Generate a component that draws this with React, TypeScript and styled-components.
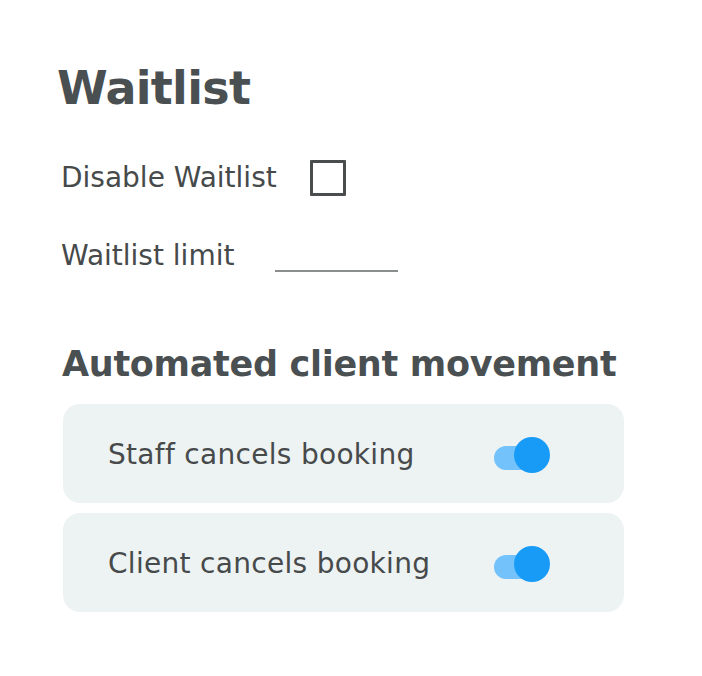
import React, { useState } from 'react';
import styled, { createGlobalStyle } from 'styled-components';

const Global = createGlobalStyle`
  body {
    margin: 0;
    background: #ffffff;
    font-family: "DejaVu Sans", "Open Sans", sans-serif;
  }
`;

const Page = styled.div`
  padding: 60px 0 0 57px;
  width: 566px;
`;

const Title = styled.h1`
  margin: 0;
  font-size: 46px;
  line-height: 56px;
  font-weight: 700;
  letter-spacing: -0.7px;
  color: #4a5052;
`;

const FieldRow = styled.div<{ $top: number }>`
  display: flex;
  align-items: center;
  margin-top: ${(p) => p.$top}px;
  padding-left: 4px;
`;

const Label = styled.span`
  font-size: 28px;
  line-height: 28px;
  color: #474a4b;
`;

const CheckBox = styled.button<{ $checked: boolean }>`
  width: 36px;
  height: 36px;
  margin-left: 33px;
  padding: 0;
  border: 3px solid #4a4d4e;
  border-radius: 1px;
  background: ${(p) => (p.$checked ? '#4a4d4e' : '#ffffff')};
  cursor: pointer;
`;

const LimitInput = styled.input`
  width: 123px;
  height: 33px;
  margin-left: 41px;
  align-self: flex-start;
  border: none;
  border-bottom: 2px solid #8b8e8f;
  background: transparent;
  outline: none;
  font-family: inherit;
  font-size: 22px;
  color: #474a4b;
  box-sizing: border-box;
`;

const Subtitle = styled.h2`
  margin: 71px 0 0 5px;
  font-size: 35px;
  line-height: 42px;
  font-weight: 700;
  letter-spacing: -0.3px;
  color: #4a5052;
  white-space: nowrap;
`;

const CardList = styled.div`
  display: flex;
  flex-direction: column;
  gap: 10px;
  margin: 19px 0 0 6px;
  width: 561px;
`;

const Card = styled.div`
  display: flex;
  align-items: center;
  justify-content: space-between;
  height: 99px;
  padding: 2px 74px 0 45px;
  border-radius: 17px;
  background: #edf2f2;
  box-sizing: border-box;
`;

const CardLabel = styled.span`
  font-size: 28px;
  line-height: 28px;
  letter-spacing: 0.3px;
  color: #474a4b;
`;

const Switch = styled.button<{ $on: boolean }>`
  position: relative;
  width: 56px;
  height: 36px;
  padding: 0;
  border: none;
  background: transparent;
  cursor: pointer;
`;

const Track = styled.span<{ $on: boolean }>`
  display: block;
  width: 52px;
  height: 24px;
  margin-top: 6px;
  border-radius: 12px;
  background: ${(p) => (p.$on ? '#73c2fb' : '#c4cacc')};
`;

const Knob = styled.span<{ $on: boolean }>`
  position: absolute;
  top: 0;
  left: ${(p) => (p.$on ? '20px' : '0')};
  width: 36px;
  height: 36px;
  border-radius: 50%;
  background: ${(p) => (p.$on ? '#189bf6' : '#f5f5f5')};
`;

function Toggle({ on, onChange }: { on: boolean; onChange: () => void }) {
  return (
    <Switch $on={on} onClick={onChange} aria-pressed={on}>
      <Track $on={on} />
      <Knob $on={on} />
    </Switch>
  );
}

export default function App() {
  const [disabled, setDisabled] = useState(false);
  const [limit, setLimit] = useState('');
  const [staff, setStaff] = useState(true);
  const [client, setClient] = useState(true);

  return (
    <>
      <Global />
      <Page>
        <Title>Waitlist</Title>
        <FieldRow $top={44}>
          <Label>Disable Waitlist</Label>
          <CheckBox $checked={disabled} onClick={() => setDisabled(!disabled)} />
        </FieldRow>
        <FieldRow $top={43}>
          <Label>Waitlist limit</Label>
          <LimitInput value={limit} onChange={(e) => setLimit(e.target.value)} />
        </FieldRow>
        <Subtitle>Automated client movement</Subtitle>
        <CardList>
          <Card>
            <CardLabel>Staff cancels booking</CardLabel>
            <Toggle on={staff} onChange={() => setStaff(!staff)} />
          </Card>
          <Card>
            <CardLabel>Client cancels booking</CardLabel>
            <Toggle on={client} onChange={() => setClient(!client)} />
          </Card>
        </CardList>
      </Page>
    </>
  );
}
